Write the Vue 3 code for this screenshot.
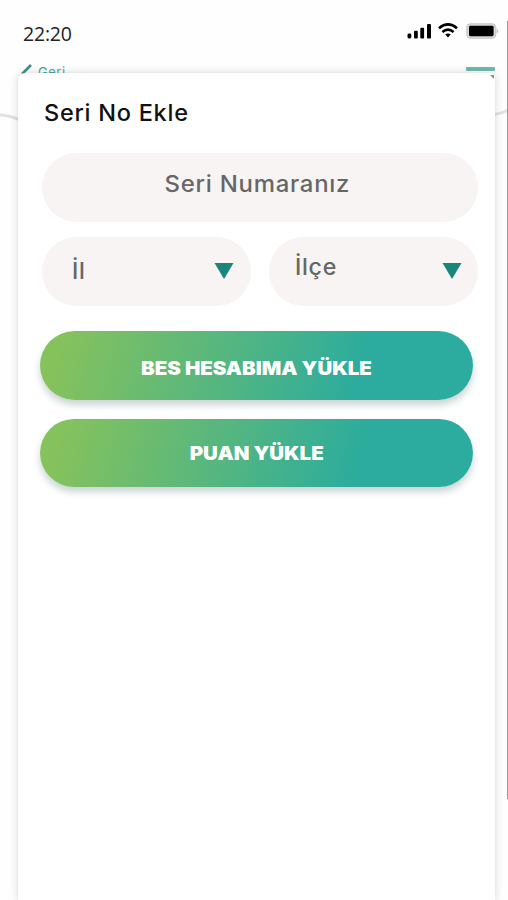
<template>
  <div class="screen">
    <header class="status-bar">
      <span class="clock">22:20</span>
      <div class="status-icons">
        <svg class="signal" width="25" height="16" viewBox="0 0 25 16">
          <rect x="0.5" y="10.6" width="3.8" height="4.8" rx="1.4" />
          <rect x="7" y="7.8" width="3.8" height="7.6" rx="1" />
          <rect x="13.3" y="4.8" width="3.8" height="10.6" rx="1" />
          <rect x="20" y="1" width="4" height="14.4" rx="1" />
        </svg>
        <svg class="wifi" width="20" height="15" viewBox="0 0 20 15">
          <path d="M1 5.2 Q10 -2.4 19 5.2" />
          <path d="M4.4 9 Q10 4.4 15.6 9" />
          <path class="wifi-dot" d="M7.2 11.6 Q10 9.6 12.8 11.6 L10 14.6 Z" />
        </svg>
        <svg class="battery" width="34" height="16" viewBox="0 0 34 16">
          <rect x="0.8" y="0.8" width="29" height="14.4" rx="3.4" fill="#dcd8d8" stroke="#c8c4c4" />
          <rect x="3" y="2.8" width="24.6" height="10.4" rx="1.4" fill="#000" />
          <path d="M30.6 5.4 Q34 8 30.6 10.6 Z" fill="#c6c4c4" />
        </svg>
      </div>
    </header>

    <nav class="nav-bar">
      <a class="back">
        <svg width="12" height="18" viewBox="0 0 12 18">
          <path d="M10 1 L2 9 L10 17" />
        </svg>
        <span>Geri</span>
      </a>
      <div class="menu"></div>
    </nav>

    <svg class="curve" width="508" height="30" viewBox="0 0 508 30">
      <path d="M0 9 Q10 9.5 20 14" />
      <path d="M490 9 Q500 8 508 4" />
    </svg>
    <div class="edge"></div>

    <main class="card">
      <svg class="corner" width="5" height="5" viewBox="0 0 5 5">
        <path d="M0 0 H4 V4 Z" />
      </svg>
      <h1 class="title">Seri No Ekle</h1>
      <div class="field serial">
        <span>Seri Numaranız</span>
      </div>
      <div class="selects">
        <div v-for="item in selects" :key="item.name" class="field select" :class="item.name">
          <span>{{ item.label }}</span>
          <svg width="20" height="16" viewBox="0 0 20 16">
            <path d="M0.5 0 H19.5 L10 16 Z" />
          </svg>
        </div>
      </div>
      <div class="actions">
        <button class="action bes"><span>BES HESABIMA YÜKLE</span></button>
        <button class="action puan"><span>PUAN YÜKLE</span></button>
      </div>
    </main>
  </div>
</template>

<script setup>
const selects = [
  { name: 'il', label: 'İl' },
  { name: 'ilce', label: 'İlçe' }
]
</script>

<style>
body {
  background: #fefefe;
}
</style>

<style scoped>
.screen {
  position: relative;
  display: flex;
  flex-direction: column;
  height: 900px;
  overflow: hidden;
  background: #fefefe;
  font-family: Inter, "Open Sans", sans-serif;
}

.status-bar {
  display: flex;
  justify-content: space-between;
  height: 60px;
  padding: 0 8px 0 23px;
  box-sizing: border-box;
}

.clock {
  margin-top: 20px;
  font-family: "Open Sans", sans-serif;
  font-size: 19.5px;
  line-height: 28px;
  letter-spacing: -0.2px;
  color: #222;
}

.status-icons {
  display: flex;
  align-items: flex-start;
  padding-top: 23px;
}

.wifi {
  margin: 0 8px 0 6px;
  fill: none;
  stroke: #000;
  stroke-width: 2.6;
}

.wifi-dot {
  fill: #000;
  stroke: none;
}

.nav-bar {
  display: flex;
  justify-content: space-between;
  height: 13px;
  padding: 0 13px 0 21px;
}

.back {
  display: flex;
  height: 24px;
  align-items: flex-start;
  gap: 5px;
  padding-top: 4px;
  font-size: 13px;
  line-height: 17px;
  letter-spacing: 0.5px;
  color: #4fa99b;
}

.back svg {
  fill: none;
  stroke: #3f9384;
  stroke-width: 2.6;
}

.menu {
  width: 29px;
  height: 4px;
  margin-top: 7px;
  border-radius: 1px;
  background: #6fb9ae;
}

/* outline of the page behind the sheet */
.curve {
  position: absolute;
  left: 0;
  top: 106px;
  fill: none;
  stroke: #e2e2e2;
  stroke-width: 3;
}

.edge {
  position: absolute;
  top: 21px;
  right: 0;
  width: 1.5px;
  height: 778px;
  background: #999;
}

.card {
  position: relative;
  flex: 1;
  margin: 0 13px 0 18px;
  padding: 25px 17px 0 22px;
  border-radius: 7px 5px 0 0;
  background: #fff;
  box-shadow: 0 0 10px rgba(0, 0, 0, 0.15), 0 0 2px rgba(0, 0, 0, 0.06);
}

.corner {
  position: absolute;
  top: 2px;
  right: 0;
  fill: #6d9f96;
}

.title {
  margin: 0 0 0 4px;
  font-size: 22.5px;
  font-weight: 500;
  line-height: 30px;
  letter-spacing: 0.7px;
  color: #111;
  transform: scaleX(1.045);
  transform-origin: left;
}

.field {
  display: flex;
  align-items: center;
  box-sizing: border-box;
  height: 69px;
  border-radius: 35px;
  background: #f7f4f3;
  font-size: 22.5px;
  font-weight: 500;
  letter-spacing: 0.7px;
  color: #666;
}

.serial {
  justify-content: center;
  margin: 25px 0 0 2px;
  padding: 0 6px 8px 0;
}

.serial span {
  transform: scaleX(1.063);
}

.selects {
  display: grid;
  grid-template-columns: 209px 209px;
  justify-content: space-between;
  margin: 15px 0 0 2px;
}

.select {
  justify-content: space-between;
  padding: 0 17px 2px 30px;
}

.select span {
  transform: scaleX(1.03);
  transform-origin: left;
}

.select path {
  fill: #18867a;
}

.select svg {
  margin-top: 1px;
}

.ilce {
  padding: 0 16px 2px 26px;
}

.ilce span {
  margin-bottom: 8px;
}

.actions {
  display: flex;
  flex-direction: column;
  gap: 19px;
  margin: 25px 5px 0 0;
}

.action {
  height: 68.5px;
  padding: 6px 0 0;
  border: none;
  border-radius: 35px;
  background: linear-gradient(105deg, #86c25c 5%, #2bac9e 74%);
  box-shadow: 0 5px 7px rgba(20, 60, 60, 0.22);
  font-family: inherit;
  font-size: 18.5px;
  font-weight: 900;
  line-height: 24px;
  color: #fff;
}

/* heavy, wide caps */
.action span {
  display: inline-block;
  transform: scaleX(1.105);
}

.puan {
  padding-top: 1px;
}
</style>
